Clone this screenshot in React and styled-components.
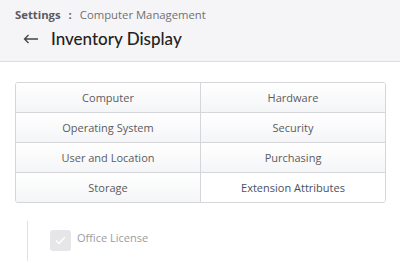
import styled, { createGlobalStyle } from "styled-components";

const Global = createGlobalStyle`
  body {
    margin: 0;
    background: #ffffff;
    font-family: "Open Sans", Lato, sans-serif;
  }
`;

const Header = styled.header`
  background: #f5f5f7;
  border-bottom: 1px solid #dcdce0;
  height: 62px;
  box-sizing: border-box;
  padding: 7px 15px 0;
`;

const Crumbs = styled.div`
  font-size: 11.3px;
  color: #707075;
  display: flex;
  gap: 8px;
  & b {
    font-weight: 700;
    color: #5a5a5f;
  }
`;

const TitleRow = styled.div`
  display: flex;
  align-items: center;
  gap: 12px;
  margin-top: 6px;
  padding-left: 8px;
`;

const Title = styled.h1`
  margin: 0;
  font-family: Lato, sans-serif;
  font-size: 17px;
  font-weight: 500;
  color: #222;
`;

const Body = styled.main`
  padding: 20px 14px 0 15px;
`;

const Grid = styled.div`
  display: grid;
  grid-template-columns: 185px 1fr;
  border: 1px solid #d6d6da;
  border-radius: 3px;
  overflow: hidden;
`;

const Cell = styled.div`
  height: 29px;
  display: flex;
  align-items: center;
  justify-content: center;
  font-size: 11px;
  color: ${(p) => (p.$active ? "#4a5060" : "#5c5c60")};
  background: ${(p) =>
    p.$active ? "#ffffff" : "linear-gradient(#ffffff, #f4f5f7)"};
  border-right: ${(p) => (p.$left ? "1px solid #d6d6da" : "none")};
  border-bottom: ${(p) => (p.$last ? "none" : "1px solid #d6d6da")};
`;

const Section = styled.div`
  margin: 18px 0 0 12px;
  border-left: 1px solid #e2e2e6;
  padding: 9px 0 10px 22px;
  display: flex;
  align-items: center;
  gap: 6px;
`;

const Check = styled.span`
  width: 21px;
  height: 21px;
  border-radius: 3px;
  background: #e6e6e8;
  display: flex;
  align-items: center;
  justify-content: center;
`;

const Label = styled.span`
  font-size: 11px;
  color: #9c9ca0;
  margin-top: -7px;
`;

const items = [
  "Computer",
  "Hardware",
  "Operating System",
  "Security",
  "User and Location",
  "Purchasing",
  "Storage",
  "Extension Attributes",
];

export default function App() {
  return (
    <>
      <Global />
      <Header>
        <Crumbs>
          <b>Settings</b>
          <b>:</b>
          <span>Computer Management</span>
        </Crumbs>
        <TitleRow>
          <svg width="16" height="10" viewBox="0 0 16 10">
            <path d="M15 5H1.5M5.5 1L1.5 5l4 4" fill="none" stroke="#444" strokeWidth="1.3" />
          </svg>
          <Title>Inventory Display</Title>
        </TitleRow>
      </Header>
      <Body>
        <Grid>
          {items.map((t, i) => (
            <Cell
              key={t}
              $left={i % 2 === 0}
              $last={i >= 6}
              $active={t === "Extension Attributes"}
            >
              {t}
            </Cell>
          ))}
        </Grid>
        <Section>
          <Check>
            <svg width="11" height="9" viewBox="0 0 11 9">
              <path d="M1 4.5l3 3L10 1" fill="none" stroke="#fff" strokeWidth="1.3" />
            </svg>
          </Check>
          <Label>Office License</Label>
        </Section>
      </Body>
    </>
  );
}
